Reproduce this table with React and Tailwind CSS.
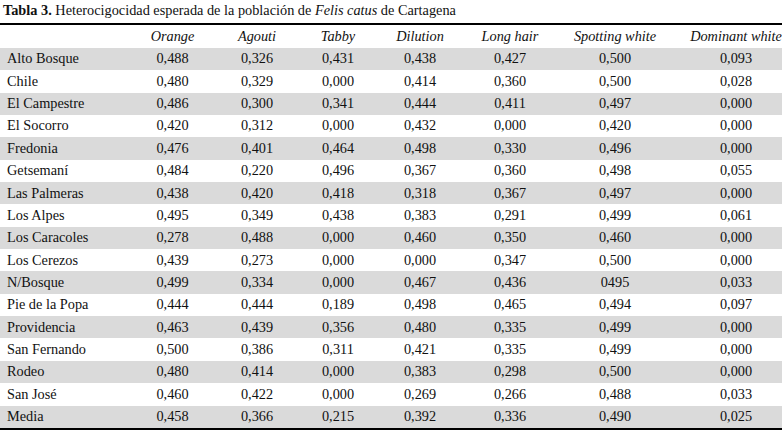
import React from "react";

const COLS = "grid grid-cols-[130px_85px_84px_78px_86px_94px_116px_109px] items-center";

const HEADERS = ["Orange", "Agouti", "Tabby", "Dilution", "Long hair", "Spotting white", "Dominant white"];

const ROWS = [
  ["Alto Bosque", "0,488", "0,326", "0,431", "0,438", "0,427", "0,500", "0,093"],
  ["Chile", "0,480", "0,329", "0,000", "0,414", "0,360", "0,500", "0,028"],
  ["El Campestre", "0,486", "0,300", "0,341", "0,444", "0,411", "0,497", "0,000"],
  ["El Socorro", "0,420", "0,312", "0,000", "0,432", "0,000", "0,420", "0,000"],
  ["Fredonia", "0,476", "0,401", "0,464", "0,498", "0,330", "0,496", "0,000"],
  ["Getsemaní", "0,484", "0,220", "0,496", "0,367", "0,360", "0,498", "0,055"],
  ["Las Palmeras", "0,438", "0,420", "0,418", "0,318", "0,367", "0,497", "0,000"],
  ["Los Alpes", "0,495", "0,349", "0,438", "0,383", "0,291", "0,499", "0,061"],
  ["Los Caracoles", "0,278", "0,488", "0,000", "0,460", "0,350", "0,460", "0,000"],
  ["Los Cerezos", "0,439", "0,273", "0,000", "0,000", "0,347", "0,500", "0,000"],
  ["N/Bosque", "0,499", "0,334", "0,000", "0,467", "0,436", "0495", "0,033"],
  ["Pie de la Popa", "0,444", "0,444", "0,189", "0,498", "0,465", "0,494", "0,097"],
  ["Providencia", "0,463", "0,439", "0,356", "0,480", "0,335", "0,499", "0,000"],
  ["San Fernando", "0,500", "0,386", "0,311", "0,421", "0,335", "0,499", "0,000"],
  ["Rodeo", "0,480", "0,414", "0,000", "0,383", "0,298", "0,500", "0,000"],
  ["San José", "0,460", "0,422", "0,000", "0,269", "0,266", "0,488", "0,033"],
  ["Media", "0,458", "0,366", "0,215", "0,392", "0,336", "0,490", "0,025"],
];

export default function App() {
  return (
    <div className="w-[782px] h-[433px] overflow-hidden bg-white text-[#111] text-[14.3px] font-[family-name:'Liberation_Serif',serif]">
      {/* title */}
      <div className="h-[23px] pl-[3px] leading-[20px]">
        <span className="font-bold">Tabla 3.</span> Heterocigocidad esperada de la población de{" "}
        <i>Felis catus</i> de Cartagena
      </div>

      <div className="border-t-2 border-b-2 border-black w-[782px]">
        <div className={`${COLS} h-[23px]`}>
          <div />
          {HEADERS.map((h, i) => (
            <div key={h} className={`text-center italic whitespace-nowrap ${i === 6 ? "pl-[17px]" : ""}`}>
              {h}
            </div>
          ))}
        </div>

        {ROWS.map((row, r) => (
          <div
            key={row[0]}
            className={`${COLS} h-[22.35px] ${r % 2 === 0 ? "bg-[#dadada]" : "bg-white"}`}
          >
            <div className="pl-[7px] whitespace-nowrap">{row[0]}</div>
            {row.slice(1).map((v, i) => (
              <div key={i} className={`text-center ${i === 6 ? "pl-[17px]" : ""}`}>
                {v}
              </div>
            ))}
          </div>
        ))}
      </div>
    </div>
  );
}
